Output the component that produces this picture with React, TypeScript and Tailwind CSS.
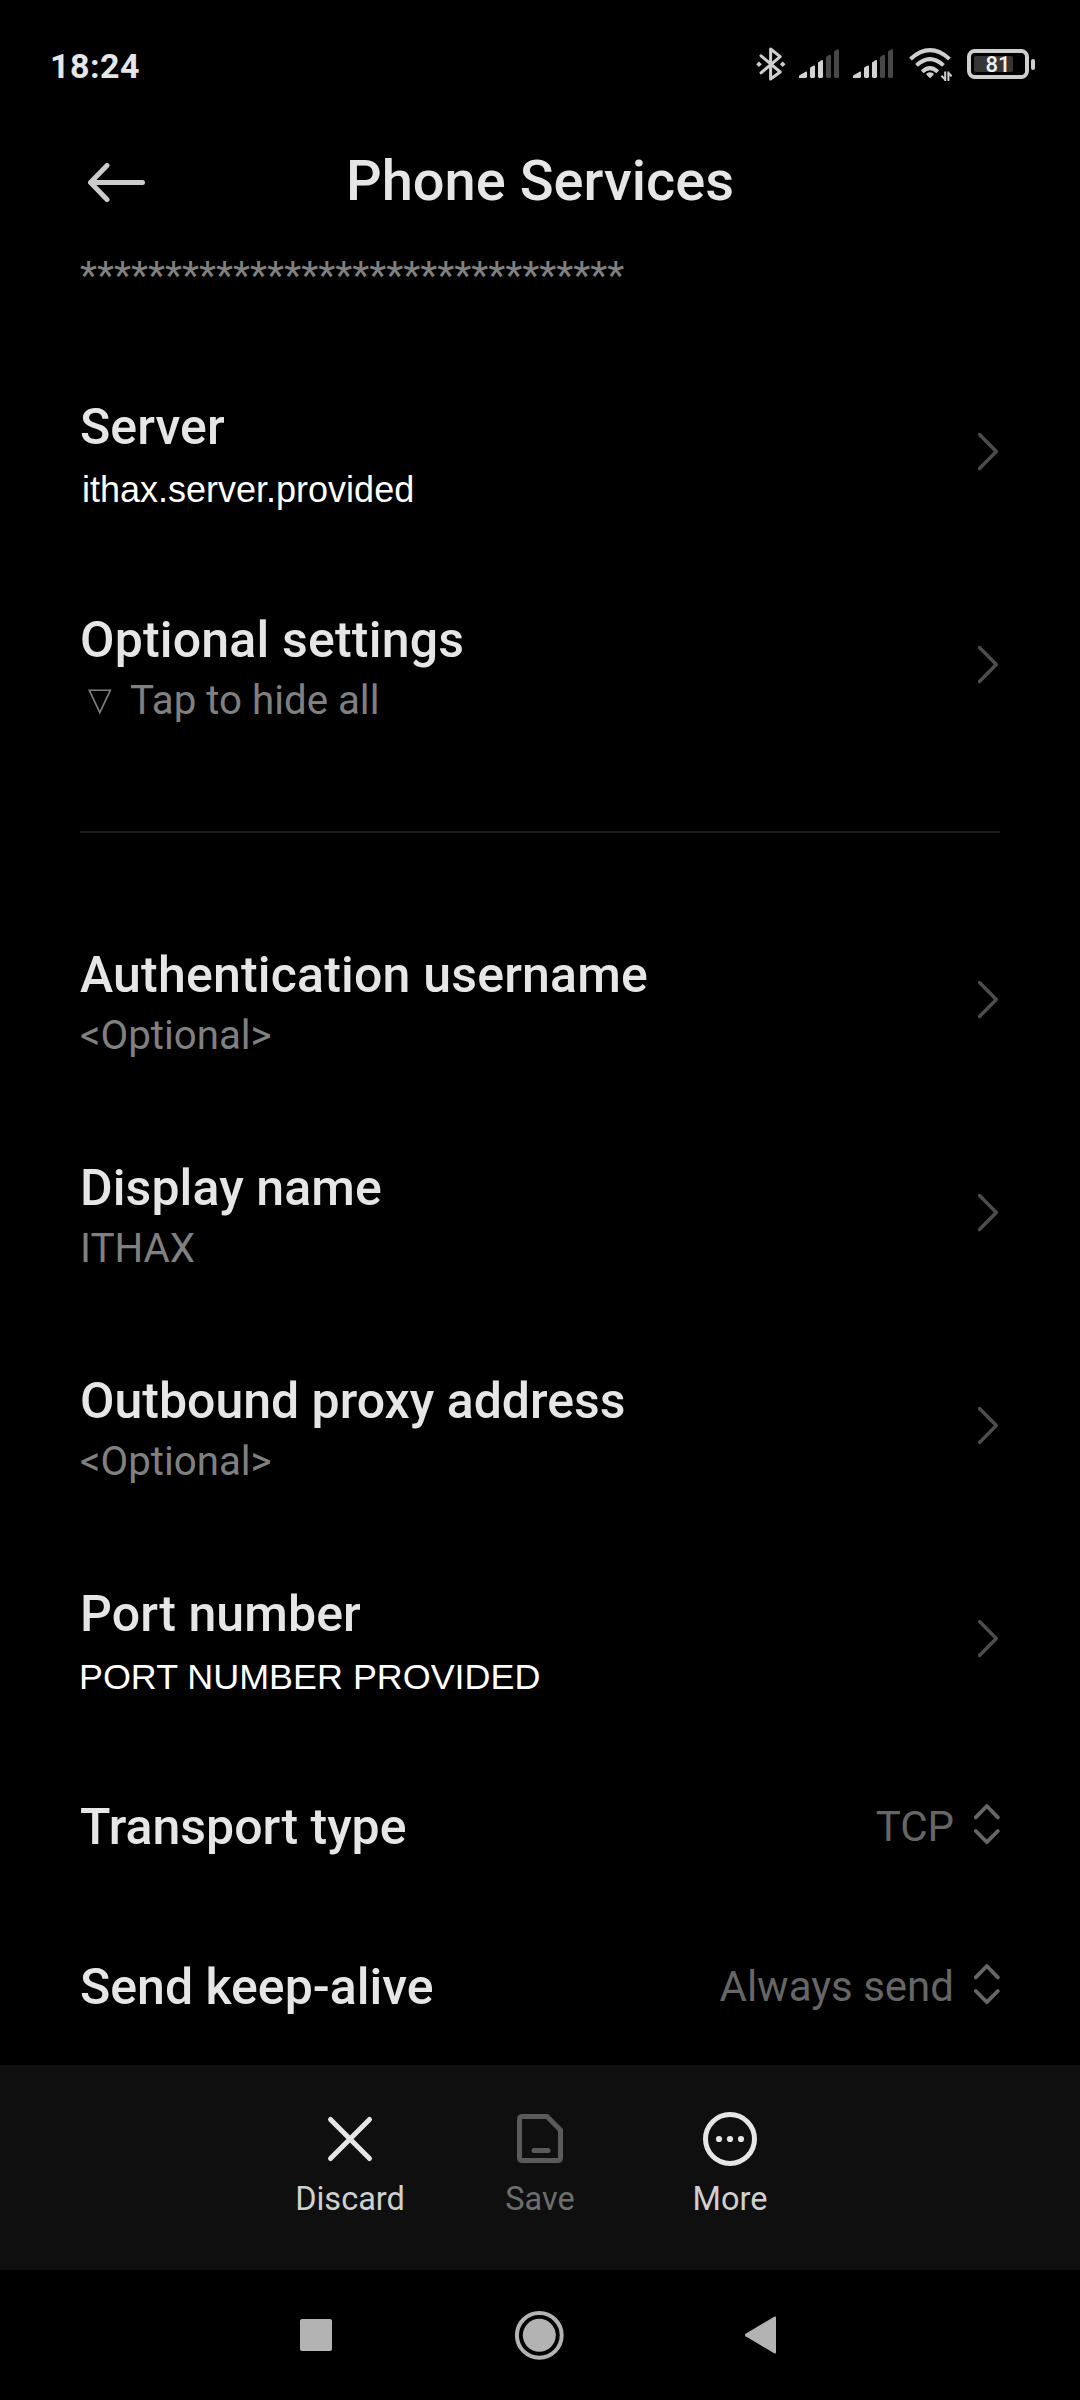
import React from 'react';
import clsx from 'clsx';

function BluetoothIcon() {
  return (
    <svg width="30" height="34" viewBox="0 0 30 34" fill="none">
      <path
        d="M5 8.8L24.2 25L14.6 32V2L24.2 9.6L5 25.8"
        stroke="#cfcfcf"
        strokeWidth="3"
        strokeLinecap="round"
        strokeLinejoin="round"
      />
      <path d="M3 14.5L5.8 17.3L3 20.1L.2 17.3ZM26.7 14.5L29.5 17.3L26.7 20.1L23.9 17.3Z" fill="#cfcfcf" />
    </svg>
  );
}

function SignalIcon() {
  return (
    <svg width="40" height="30" viewBox="0 0 40 30">
      <path d="M0 29V27.5Q0 26.4 1 26L6.6 22.8Q8 22.2 8 23.6V27.6Q8 29 6.6 29Z" fill="#d2d2d2" />
      <path d="M11 18.8L14 16.8Q16 15.8 16 17.6V27.6Q16 29 14.6 29H12.4Q11 29 11 27.6Z" fill="#d2d2d2" />
      <path d="M19 13.4L22 11.4Q24 10.4 24 12.2V27.6Q24 29 22.6 29H20.4Q19 29 19 27.6Z" fill="#d2d2d2" />
      <path d="M27 8L30 6Q32 5 32 6.8V27.6Q32 29 30.6 29H28.4Q27 29 27 27.6Z" fill="#484848" />
      <path d="M35 2.6L38 .6Q40 -.4 40 1.4V27.6Q40 29 38.6 29H36.4Q35 29 35 27.6Z" fill="#484848" />
    </svg>
  );
}

function WifiIcon() {
  return (
    <svg width="43" height="34" viewBox="0 0 43 34" fill="none">
      <g stroke="#cfcfcf" strokeWidth="4">
        <path d="M1.5 11Q21 -6.6 40.5 11" />
        <path d="M7.5 17.4Q21 5 34.5 17.4" />
        <path d="M13.2 23.8Q21 16.4 28.8 23.8" />
      </g>
      <path d="M21 30.2L17.4 26.8Q17 25.6 18.2 25Q21 23.4 23.8 25Q25 25.6 24.6 26.8Z" fill="#cfcfcf" />
      <path d="M36.2 23.6V33M36.2 31.6L32.4 27.8M39.4 33V23.6M39.4 24.8L42.6 28.4" stroke="#cfcfcf" strokeWidth="2" />
    </svg>
  );
}

function Battery({ level }: { level: number }) {
  return (
    <div className="flex items-center gap-[2px]">
      <div className="relative flex h-[30px] w-[62px] items-center justify-center rounded-[8px] border-4 border-[#cfcfcf]">
        <div className="absolute top-[3px] left-[3px] h-[16px] w-[39px] rounded-[2px] bg-[#363636]" />
        <span className="relative mt-px text-[22px] leading-[22px] font-medium text-[#f0f0f0]">{level}</span>
      </div>
      <div className="h-[11px] w-[4px] rounded-[2px] bg-[#cfcfcf]" />
    </div>
  );
}

function StatusBar() {
  return (
    <div className="flex h-[128px] items-center justify-between pr-[45px] pl-[50px]">
      <span className="mt-[3px] text-[34px] leading-[40px] font-bold tracking-[0.5px] text-[#e6e6e6]">18:24</span>
      <div className="flex items-center">
        <BluetoothIcon />
        <div className="ml-[13px]"><SignalIcon /></div>
        <div className="ml-[14px]"><SignalIcon /></div>
        <div className="mt-[2px] ml-[16px]"><WifiIcon /></div>
        <div className="ml-[15px]"><Battery level={81} /></div>
      </div>
    </div>
  );
}

function Header() {
  return (
    <header className="grid h-[117px] grid-cols-[1fr_auto_1fr] items-start px-[88px]">
      <button className="mt-[35px]">
        <svg width="58" height="40" viewBox="0 0 58 40" fill="none">
          <path
            d="M54.5 19.5H3M19 2.5L2.5 19.5L19 36.5"
            stroke="#cccccc"
            strokeWidth="5"
            strokeLinecap="round"
            strokeLinejoin="round"
          />
        </svg>
      </button>
      <h1 className="mt-[20px] text-[56px] leading-[66px] font-medium text-[#e6e6e6]">Phone Services</h1>
      <span />
    </header>
  );
}

function Chevron() {
  return (
    <svg width="22" height="38" viewBox="0 0 22 38" fill="none">
      <path d="M1.5 1.5L18.3 18.5L1.5 35.5" stroke="#4d4d4d" strokeWidth="3.4" strokeLinecap="round" strokeLinejoin="round" />
    </svg>
  );
}

function UpDown() {
  return (
    <svg width="26" height="40" viewBox="0 0 26 40" fill="none">
      <path
        d="M1.8 13.4L12.8 2L23.8 13.4M1.8 27L12.8 38.2L23.8 27"
        stroke="#666666"
        strokeWidth="3.8"
        strokeLinecap="round"
        strokeLinejoin="round"
      />
    </svg>
  );
}

interface RowProps {
  title: string;
  titleClass?: string;
  children: React.ReactNode;
}

function Row({ title, titleClass = 'tracking-[0.1px]', children }: RowProps) {
  return (
    <div className="flex h-[213px] items-start justify-between px-[80px]">
      <div className="mt-[53px]">
        <div className={clsx('text-[50px] leading-[58px] font-medium text-[#e6e6e6]', titleClass)}>{title}</div>
        {children}
      </div>
      <div className="mt-[88px]"><Chevron /></div>
    </div>
  );
}

function Summary({ children }: { children: React.ReactNode }) {
  return <div className="mt-[8px] flex items-center text-[40.25px] leading-[47px] text-[#808080]">{children}</div>;
}

function SelectRow({ title, value }: { title: string; value: string }) {
  return (
    <div className="flex h-[160px] items-center justify-between px-[80px]">
      <span className="mt-[3px] text-[50px] leading-[58px] font-medium text-[#e6e6e6]">{title}</span>
      <div className="flex items-center">
        <span className="mt-[3px] mr-[20px] text-[42px] leading-[50px] text-[#666666]">{value}</span>
        <div className="-mt-[2px]"><UpDown /></div>
      </div>
    </div>
  );
}

interface ActionProps {
  label: string;
  disabled?: boolean;
  children: React.ReactNode;
}

function Action({ label, disabled, children }: ActionProps) {
  return (
    <button className={clsx('flex w-[190px] flex-col items-center', disabled ? 'text-[#5a5a5a]' : 'text-[#e6e6e6]')}>
      <svg width="56" height="56" viewBox="0 0 56 56" fill="none" stroke="currentColor" strokeWidth="5" strokeLinecap="round">
        {children}
      </svg>
      <span className={clsx('mt-[13px] text-[32.5px] leading-[38px]', disabled ? 'text-[#6e6e6e]' : 'text-[#d0d0d0]')}>
        {label}
      </span>
    </button>
  );
}

export default function App() {
  return (
    <div className="flex h-[2400px] w-[1080px] flex-col overflow-hidden bg-black font-['Roboto',sans-serif]">
      <StatusBar />
      <Header />

      <main className="flex h-[1820px] flex-col">
        <div className="h-[100px] px-[80px] pt-[7px] text-[39.5px] leading-[47px] text-[#808080]">
          {'*'.repeat(32)}
        </div>

        <Row title="Server">
          <div className="mt-[13px] ml-[2px] font-['Liberation_Sans',Arial,sans-serif] text-[36px] leading-[41px] text-white">
            ithax.server.provided
          </div>
        </Row>
        <Row title="Optional settings" titleClass="tracking-[0.2px]">
          <Summary>
            <svg className="mt-[2px] mr-[18px] ml-[8px]" width="24" height="26" viewBox="0 0 24 26" fill="none">
              <path d="M1.2 1.2H22.4L11.8 23.6Z" stroke="#808080" strokeWidth="1.6" />
            </svg>
            Tap to hide all
          </Summary>
        </Row>

        <div className="mx-[80px] mt-[60px] mb-[60px] h-[2px] shrink-0 bg-[#1a1a1a]" />

        <Row title="Authentication username" titleClass="tracking-[0.2px]">
          <Summary>&lt;Optional&gt;</Summary>
        </Row>
        <Row title="Display name">
          <Summary>ITHAX</Summary>
        </Row>
        <Row title="Outbound proxy address" titleClass="tracking-normal">
          <Summary>&lt;Optional&gt;</Summary>
        </Row>
        <Row title="Port number">
          <div className="mt-[14px] -ml-px font-['Liberation_Sans',Arial,sans-serif] text-[35.9px] leading-[41px] text-white">
            PORT NUMBER PROVIDED
          </div>
        </Row>
        <SelectRow title="Transport type" value="TCP" />
        <SelectRow title="Send keep-alive" value="Always send" />
      </main>

      <div className="flex h-[205px] items-start justify-center bg-[#0f0f0f] pt-[46px]">
        <Action label="Discard">
          <path d="M8.5 8.5L47.5 47.5M47.5 8.5L8.5 47.5" />
        </Action>
        <Action label="Save" disabled>
          <path d="M10.5 5.5H35L48.5 19V46.5Q48.5 49.5 45.5 49.5H10.5Q7.5 49.5 7.5 46.5V8.5Q7.5 5.5 10.5 5.5M22 39.5H36" />
        </Action>
        <Action label="More">
          <circle cx="28" cy="28" r="24.5" />
          <g fill="currentColor" stroke="none">
            <circle cx="17" cy="28" r="3.1" />
            <circle cx="28" cy="28" r="3.1" />
            <circle cx="39" cy="28" r="3.1" />
          </g>
        </Action>
      </div>

      <nav className="flex h-[130px] items-center pl-[300px]">
        <div className="size-[32px] rounded-[2px] bg-[#b3b3b3]" />
        <svg className="ml-[182px]" width="50" height="50" viewBox="0 0 50 50" fill="none">
          <circle cx="25.3" cy="25.3" r="22.4" stroke="#b3b3b3" strokeWidth="4" />
          <circle cx="25.3" cy="25.3" r="16.5" fill="#b3b3b3" />
        </svg>
        <svg className="ml-[180px]" width="33" height="38" viewBox="0 0 33 38">
          <path d="M1.6 20.2Q.2 19 1.6 17.8L30.2 .8Q32 0 32 1.8V36.2Q32 38 30.2 37.2Z" fill="#b3b3b3" />
        </svg>
      </nav>
    </div>
  );
}
